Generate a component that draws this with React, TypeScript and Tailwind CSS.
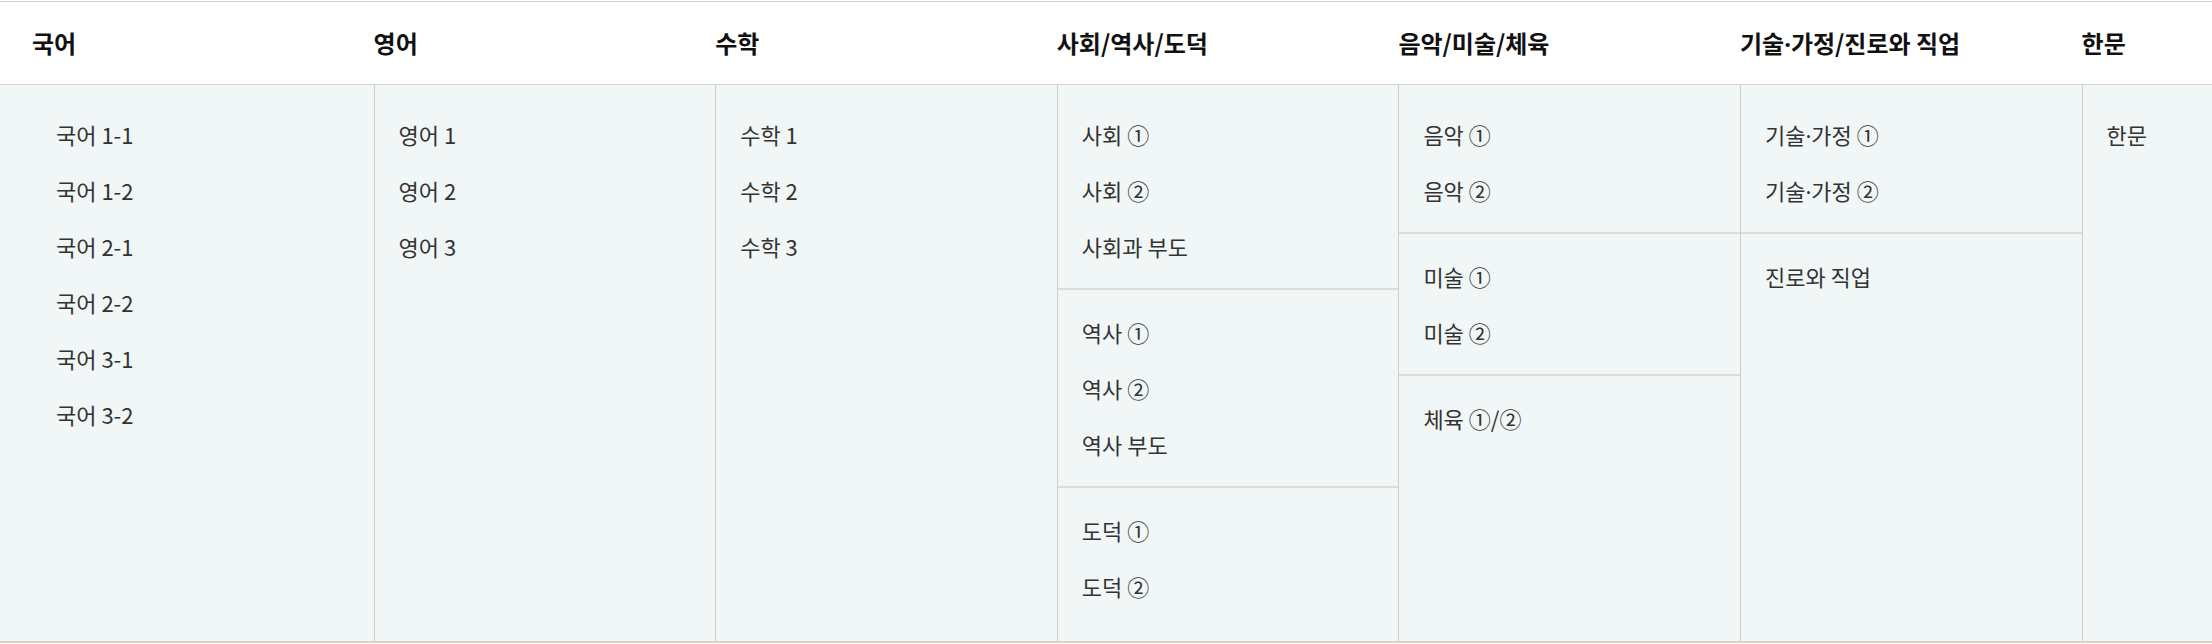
const FONT = "font-['Noto_Sans_CJK_KR','Noto_Sans',sans-serif]";

type Column = { title: string; groups: string[][] };

const COLUMNS: Column[] = [
  { title: "국어", groups: [["국어 1-1", "국어 1-2", "국어 2-1", "국어 2-2", "국어 3-1", "국어 3-2"]] },
  { title: "영어", groups: [["영어 1", "영어 2", "영어 3"]] },
  { title: "수학", groups: [["수학 1", "수학 2", "수학 3"]] },
  {
    title: "사회/역사/도덕",
    groups: [
      ["사회 ①", "사회 ②", "사회과 부도"],
      ["역사 ①", "역사 ②", "역사 부도"],
      ["도덕 ①", "도덕 ②"],
    ],
  },
  {
    title: "음악/미술/체육",
    groups: [["음악 ①", "음악 ②"], ["미술 ①", "미술 ②"], ["체육 ①/②"]],
  },
  { title: "기술·가정/진로와 직업", groups: [["기술·가정 ①", "기술·가정 ②"], ["진로와 직업"]] },
  { title: "한문", groups: [["한문"]] },
];

// the CJK font sets the middle dot full width; the reference has a narrow one
function Label({ text }: { text: string }) {
  const parts = text.split("·");
  return (
    <>
      {parts.map((p, i) => (
        <span key={i}>
          {i > 0 && <span className="font-['Noto_Sans',sans-serif]">·</span>}
          {p}
        </span>
      ))}
    </>
  );
}

export default function App() {
  return (
    <div className={`${FONT} w-full overflow-hidden bg-white pt-px`}>
      {/* subject headers */}
      <div className="flex h-[84px] border-t border-b border-[#d3d3d3] bg-white pl-8">
        {COLUMNS.map((col) => (
          <div key={col.title} className="flex w-[341.6px] shrink-0 items-center">
            <span className="text-[24px] font-bold text-[#111]">
              <Label text={col.title} />
            </span>
          </div>
        ))}
      </div>

      {/* textbook lists */}
      <div className="flex border-b-2 border-[#d7d4c5] bg-[#f1f6f6] pl-8">
        {COLUMNS.map((col, i) => (
          <div
            key={col.title}
            className={`w-[341.6px] shrink-0 pt-[7px] pb-[13px] ${i > 0 ? "border-l border-[#cfcfca]" : ""}`}
          >
            {col.groups.map((items, g) => (
              <ul
                key={g}
                className={`py-[14px] ${g > 0 ? "border-t-2 border-[#dcdddd]" : ""}`}
              >
                {items.map((item) => (
                  <li key={item} className="h-14 pl-6 text-[22px] leading-[56px] text-[#333]">
                    <Label text={item} />
                  </li>
                ))}
              </ul>
            ))}
          </div>
        ))}
      </div>
    </div>
  );
}
